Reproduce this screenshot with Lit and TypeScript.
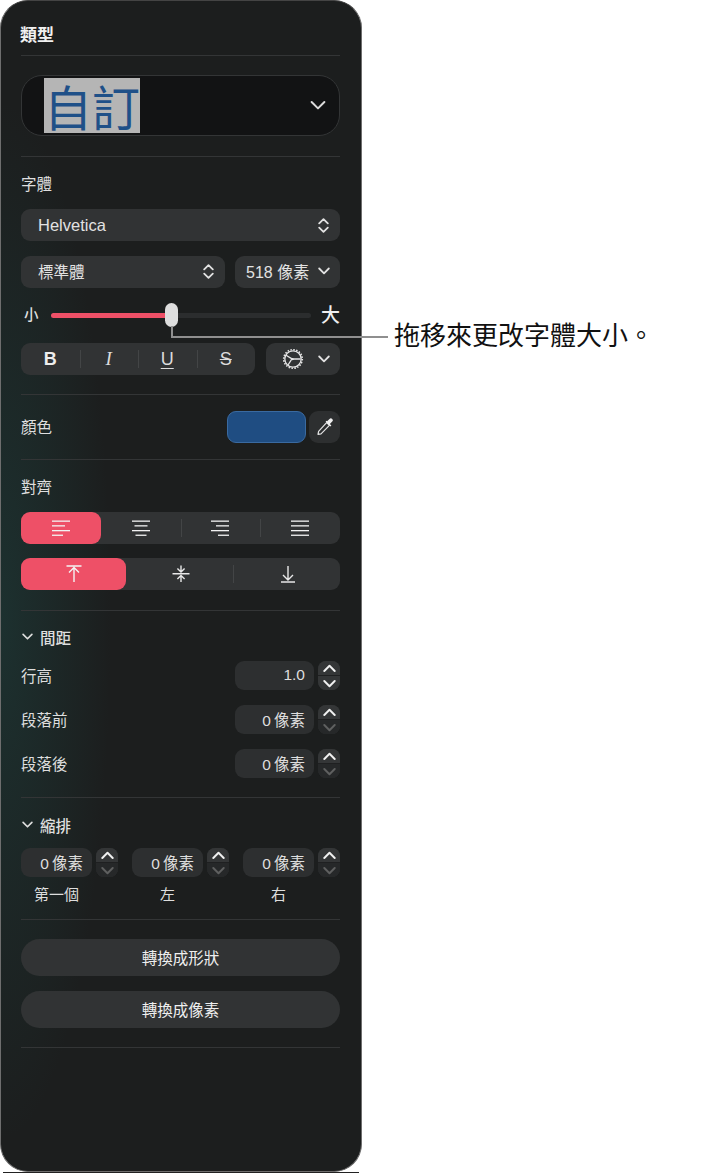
import { LitElement, html, css, svg } from "lit";
import { customElement } from "lit/decorators.js";

const chevDown = (w = 12) => html`<svg class="ic" width=${w} height=${(w * 8) / 12} viewBox="0 0 12 8"><path d="M1.2 1.5 6 6.3l4.8-4.8" fill="none" stroke="currentColor" stroke-width=${w > 13 ? 1.5 : 1.8} stroke-linecap="round" stroke-linejoin="round"/></svg>`;
const upDown = html`<svg class="ic" width="11" height="15" viewBox="0 0 11 15"><path d="M1.2 5.4 5.5 1.2l4.3 4.2M1.2 9.6l4.3 4.2 4.3-4.2" fill="none" stroke="currentColor" stroke-width="1.8" stroke-linecap="round" stroke-linejoin="round"/></svg>`;

const lines = (rows: [number, number][]) => html`<svg class="ic" width="18" height="16" viewBox="0 0 18 16">${rows.map(
  ([x, w], i) => svg`<rect x=${x} y=${[0.5, 5.2, 10, 14.6][i]} width=${w} height="1.3" fill="#f2f2f2"/>`
)}</svg>`;

const gear = html`<svg class="ic" width="22" height="22" viewBox="0 0 22 22" fill="none" stroke="#e6e6e6">
  <circle cx="11" cy="11" r="8.2" stroke-width="1.3"/>
  <circle cx="11" cy="11" r="9.3" stroke-width="1.6" stroke-dasharray="1.5 1.42"/>
  <path d="M4 7.2 9.6 10.6M9.6 11.4 6 17M12 11h6.6M9.6 10.6v1l2.4-.6z" stroke-width="1.3"/>
</svg>`;

const dropper = html`<svg class="ic" width="18" height="18" viewBox="0 0 18 18">
  <path d="M10.6 4.6 13.4 7.4 5 15.8l-3 .6.6-3z" fill="#2d2f30" stroke="#e4e4e4" stroke-width="1.2" stroke-linejoin="round"/>
  <path d="M9.6 3.6 14.4 8.4 15.4 7.4 13.9 5.9 16.2 3.6a1.9 1.9 0 0 0-2.7-2.7L11.1 3.2 10.5 2.7z" fill="#efefef"/>
</svg>`;

const stepper = (dim: boolean) => html`<div class="stepper">
  <span class="st"><svg width="13" height="9" viewBox="0 0 12 8"><path d="M1.2 6.3 6 1.5l4.8 4.8" fill="none" stroke="#f0f0f0" stroke-width="1.8" stroke-linecap="round" stroke-linejoin="round"/></svg></span>
  <span class="st ${dim ? "dim" : ""}"><svg width="13" height="9" viewBox="0 0 12 8"><path d="M1.2 1.7 6 6.5l4.8-4.8" fill="none" stroke=${dim ? "#5f6060" : "#f0f0f0"} stroke-width="1.8" stroke-linecap="round" stroke-linejoin="round"/></svg></span>
</div>`;

const arrowTop = html`<svg class="ic" width="16" height="18" viewBox="0 0 16 18"><path d="M.5 1h15M8 2.5V17M3 7.5 8 2.5l5 5" fill="none" stroke="#f4f4f4" stroke-width="1.4"/></svg>`;
const arrowMid = html`<svg class="ic" width="18" height="18" viewBox="0 0 18 18"><path d="M.5 8.7h17M9 .5v6M5.4 3.4 9 7l3.6-3.6M9 17v-6M5.4 14 9 10.4l3.6 3.6" fill="none" stroke="#e8e8e8" stroke-width="1.4"/></svg>`;
const arrowBot = html`<svg class="ic" width="16" height="18" viewBox="0 0 16 18"><path d="M1 17h14M8 1v14M3 10l5 5 5-5" fill="none" stroke="#e8e8e8" stroke-width="1.4"/></svg>`;

@customElement("app-root")
export class AppRoot extends LitElement {
  static styles = css`
    :host {
      display: block;
      position: relative;
      width: 726px;
      height: 1173px;
      background: #fff;
      overflow: hidden;
      font-family: "Liberation Sans", "Noto Sans CJK TC", sans-serif;
    }
    * { box-sizing: border-box; }
    .ic { display: block; flex: none; }
    .panel {
      width: 362px;
      height: 1172px;
      border: 1px solid #6e6e6e;
      border-top-color: #444;
      border-radius: 28px;
      padding: 0 21px 0 20px;
      color: #dedede;
      font-size: 15.5px;
      background:
        radial-gradient(ellipse 110px 520px at 0 620px, rgba(30, 88, 84, 0.32), rgba(30, 88, 84, 0) 100%),
        #1c1e1e;
      display: flex;
      flex-direction: column;
    }
    .baseline {
      position: absolute;
      left: 3px;
      top: 1172px;
      width: 356px;
      height: 1px;
      background: #222;
    }
    .hr { height: 1px; background: #333536; flex: none; }
    .title {
      height: 24px;
      margin-top: 23px;
      line-height: 24px;
      font-size: 17px;
      font-weight: 700;
      margin-left: -1px;
      color: #f0f0f0;
    }
    .label { height: 20px; line-height: 20px; flex: none; }
    .select {
      height: 61px;
      margin-top: 19px;
      border: 1px solid #333536;
      border-radius: 21px;
      background: #121314;
      display: flex;
      align-items: center;
      justify-content: space-between;
      padding: 0 13px 0 22px;
      color: #dcdcdc;
    }
    .sel-text {
      font-size: 48px;
      line-height: 55px;
      height: 55px;
      background: #b5b5b5;
      color: #1f5088;
      font-family: "Noto Sans CJK TC", sans-serif;
    }
    .ctl {
      height: 32px;
      border-radius: 9px;
      background: #313334;
      display: flex;
      align-items: center;
      justify-content: space-between;
      padding: 0 11px 0 17px;
      color: #e2e2e2;
      flex: none;
    }
    .tight { padding-bottom: 2px; }
    .row { display: flex; justify-content: space-between; align-items: center; flex: none; }
    .helv { font-size: 16.5px; }
    .val { font-size: 16px; }
    .style-sel { width: 204px; padding-bottom: 2px; }
    .size-sel { width: 105px; padding: 0 10px 2px 11px; }
    .bius { width: 234px; }
    .gear-sel { width: 74px; padding: 0 10px 0 16px; }
    .slider { height: 24px; position: relative; }
    .small { position: absolute; left: 3px; top: 2px; font-size: 14.5px; line-height: 20px; font-weight: 500; }
    .big { position: absolute; right: 0; top: 1px; font-size: 19px; line-height: 24px; font-weight: 500; color: #eee; }
    .track {
      position: absolute;
      left: 30px;
      top: 10px;
      width: 260px;
      height: 5px;
      border-radius: 3px;
      background: #2b2d2e;
    }
    .fill {
      position: absolute;
      left: 30px;
      top: 10px;
      width: 122px;
      height: 5px;
      border-radius: 3px 0 0 3px;
      background: #ee5067;
    }
    .thumb {
      position: absolute;
      left: 144px;
      top: 0;
      width: 13px;
      height: 24px;
      border-radius: 7px;
      background: #dedede;
    }
    .seg {
      height: 32px;
      border-radius: 9px;
      background: #313334;
      display: flex;
      flex: none;
    }
    .cell {
      flex: 1 1 0;
      display: flex;
      align-items: center;
      justify-content: center;
      position: relative;
      color: #ededed;
      font-size: 16px;
    }
    .cell.on { background: #ee5067; border-radius: 9px; }
    .cell.pl { padding-left: 2px; }
    .cell.sep::before {
      content: "";
      position: absolute;
      left: 0;
      top: 7px;
      bottom: 7px;
      width: 1px;
      background: #434546;
    }
    .b { font-weight: 700; font-size: 18px; }
    .i { font-family: "Liberation Serif", serif; font-style: italic; font-size: 19px; color: #dcdcdc; }
    .u { text-decoration: underline; text-underline-offset: 3px; font-size: 18px; color: #dcdcdc; }
    .s { text-decoration: line-through; font-size: 18px; color: #dcdcdc; }
    .swatch {
      width: 79px;
      height: 32px;
      border-radius: 9px;
      background: #1f4d82;
      border: 1px solid #3a6aa0;
    }
    .drop {
      width: 31px;
      height: 32px;
      margin-left: 3px;
      border-radius: 9px;
      background: #2d2f30;
      display: flex;
      align-items: center;
      justify-content: center;
    }
    .group { display: flex; align-items: center; gap: 7px; padding: 0 0 2px 1px; font-size: 15.5px; height: 20px; font-weight: 500; }
    .field {
      height: 29px;
      border-radius: 9px;
      background: #2d2f30;
      display: flex;
      align-items: center;
      justify-content: flex-end;
      padding: 0 9px 2px 0;
      font-size: 15.5px;
      color: #dedede;
    }
    .stepper {
      width: 22px;
      height: 29px;
      border-radius: 8px;
      background: #2d2f30;
      display: flex;
      flex-direction: column;
      overflow: hidden;
    }
    .st { flex: 1; display: flex; align-items: center; justify-content: center; background: #343637; }
    .st.dim { background: #262829; }
    .st + .st { border-top: 1px solid #1f2021; }
    .fieldset { display: flex; align-items: center; gap: 4px; }
    .w79 { width: 79px; }
    .w70 { width: 71px; }
    .indent { display: flex; justify-content: space-between; height: 29px; flex: none; }
    .caps { display: flex; justify-content: space-between; height: 20px; flex: none; }
    .caps span { width: 97px; text-align: center; line-height: 20px; font-size: 15px; padding-right: 26px; }
    .btn {
      height: 37px;
      border-radius: 19px;
      background: #313334;
      display: flex;
      align-items: center;
      justify-content: center;
      color: #eee;
      font-size: 15.5px;
      flex: none;
      padding-bottom: 2px;
    }
    .lv { position: absolute; left: 171px; top: 326px; width: 2px; height: 12px; background: #8f8f8f; }
    .lh { position: absolute; left: 171px; top: 336px; width: 217px; height: 2px; background: #8f8f8f; }
    .note {
      position: absolute;
      left: 394px;
      top: 316px;
      font-family: "Noto Sans CJK TC", sans-serif;
      font-size: 26px;
      line-height: 36px;
      color: #111;
      white-space: nowrap;
    }
    .m7 { margin-top: 7px; } .m8 { margin-top: 8px; } .m12 { margin-top: 12px; } .m13 { margin-top: 13px; } .m14 { margin-top: 14px; }
    .m15 { margin-top: 15px; } .m16 { margin-top: 16px; } .m17 { margin-top: 17px; } .m18 { margin-top: 18px; }
    .m19 { margin-top: 19px; } .m20 { margin-top: 20px; }
  `;

  private fieldRow(label: string, value: string, dim: boolean, m: string) {
    return html`<div class="row ${m}"><span class="tight">${label}</span>
      <div class="fieldset"><div class="field w79">${value}</div>${stepper(dim)}</div></div>`;
  }

  private indentSet() {
    return html`<div class="fieldset"><div class="field w70">0\u2009像素</div>${stepper(true)}</div>`;
  }

  render() {
    return html`
      <div class="panel">
        <div class="title">類型</div>
        <div class="hr m7"></div>
        <div class="select"><span class="sel-text">自訂</span>${chevDown(16)}</div>
        <div class="hr m20"></div>
        <div class="label m18">字體</div>
        <div class="ctl m14"><span class="helv">Helvetica</span>${upDown}</div>
        <div class="row m15">
          <div class="ctl style-sel"><span>標準體</span>${upDown}</div>
          <div class="ctl size-sel"><span class="val">518 像素</span>${chevDown()}</div>
        </div>
        <div class="slider m15">
          <span class="small">小</span>
          <div class="track"></div>
          <div class="fill"></div>
          <div class="thumb"></div>
          <span class="big">大</span>
        </div>
        <div class="row m16">
          <div class="seg bius">
            <div class="cell"><span class="b">B</span></div>
            <div class="cell sep"><span class="i">I</span></div>
            <div class="cell sep"><span class="u">U</span></div>
            <div class="cell sep"><span class="s">S</span></div>
          </div>
          <div class="ctl gear-sel">${gear}${chevDown()}</div>
        </div>
        <div class="hr m19"></div>
        <div class="row m16">
          <span class="tight">顏色</span>
          <div class="row"><div class="swatch"></div><div class="drop">${dropper}</div></div>
        </div>
        <div class="hr m16"></div>
        <div class="label m18">對齊</div>
        <div class="seg m14">
          <div class="cell on">${lines([[0, 18], [0, 13], [0, 18], [0, 11]])}</div>
          <div class="cell">${lines([[0, 18], [2.5, 13], [0, 18], [3.5, 11]])}</div>
          <div class="cell sep">${lines([[0, 18], [5, 13], [0, 18], [7, 11]])}</div>
          <div class="cell sep">${lines([[0, 18], [0, 18], [0, 18], [0, 18]])}</div>
        </div>
        <div class="seg m14">
          <div class="cell on">${arrowTop}</div>
          <div class="cell pl">${arrowMid}</div>
          <div class="cell sep pl">${arrowBot}</div>
        </div>
        <div class="hr m20"></div>
        <div class="group m17">${chevDown(11)}<span>間距</span></div>
        ${this.fieldRow("行高", "1.0", false, "m13")}
        ${this.fieldRow("段落前", "0\u2009像素", true, "m15")}
        ${this.fieldRow("段落後", "0\u2009像素", true, "m15")}
        <div class="hr m19"></div>
        <div class="group m18">${chevDown(11)}<span>縮排</span></div>
        <div class="indent m12">${this.indentSet()}${this.indentSet()}${this.indentSet()}</div>
        <div class="caps m8"><span>第一個</span><span>左</span><span>右</span></div>
        <div class="hr m14"></div>
        <div class="btn m19">轉換成形狀</div>
        <div class="btn m15">轉換成像素</div>
        <div class="hr m19"></div>
      </div>
      <div class="baseline"></div>
      <div class="lv"></div>
      <div class="lh"></div>
      <div class="note">拖移來更改字體大小。</div>
    `;
  }
}
